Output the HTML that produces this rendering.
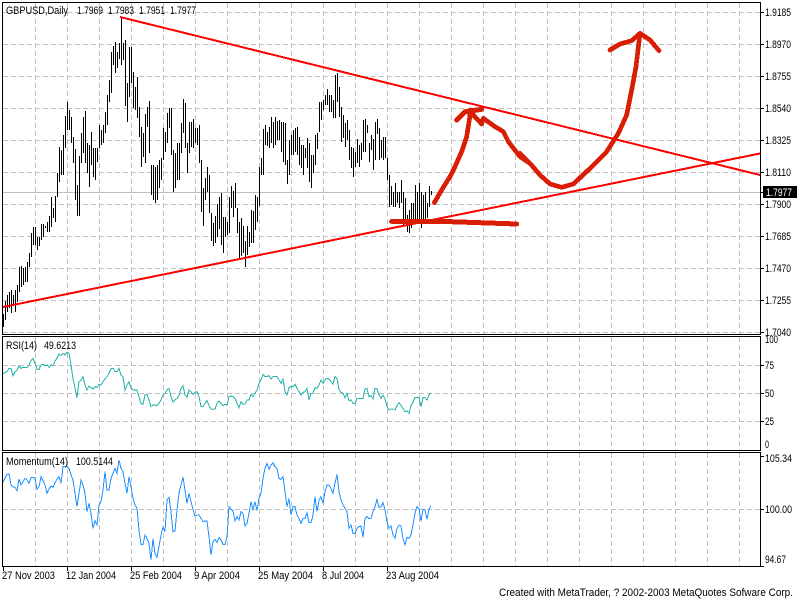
<!DOCTYPE html>
<html><head><meta charset="utf-8"><title>GBPUSD Daily</title>
<style>
html,body{margin:0;padding:0;background:#fff;width:800px;height:600px;overflow:hidden}
svg{display:block}
text{font-family:"Liberation Sans",sans-serif;font-size:11px;fill:#000}
</style></head><body>
<svg width="800" height="600" viewBox="0 0 800 600" xmlns="http://www.w3.org/2000/svg">
<rect width="800" height="600" fill="#fff"/>
<!-- grid -->
<g fill="none" stroke="#c0c0c0" stroke-dasharray="5 3" shape-rendering="crispEdges">
<path d="M3 12.5H760M3 44.5H760M3 76.5H760M3 108.5H760M3 140.5H760M3 172.5H760M3 204.5H760M3 236.5H760M3 268.5H760M3 300.5H760M3 332.5H760"/>
<path d="M3 365.5H760M3 393.5H760M3 421.5H760M3 509.5H760"/>
<path d="M35.5 3V334M67.5 3V334M99.5 3V334M131.5 3V334M163.5 3V334M195.5 3V334M227.5 3V334M259.5 3V334M291.5 3V334M323.5 3V334M355.5 3V334M387.5 3V334M419.5 3V334M451.5 3V334M483.5 3V334M515.5 3V334M547.5 3V334M579.5 3V334M611.5 3V334M643.5 3V334M675.5 3V334M707.5 3V334M739.5 3V334"/>
<path d="M35.5 337V450M67.5 337V450M99.5 337V450M131.5 337V450M163.5 337V450M195.5 337V450M227.5 337V450M259.5 337V450M291.5 337V450M323.5 337V450M355.5 337V450M387.5 337V450M419.5 337V450M451.5 337V450M483.5 337V450M515.5 337V450M547.5 337V450M579.5 337V450M611.5 337V450M643.5 337V450M675.5 337V450M707.5 337V450M739.5 337V450"/>
<path d="M35.5 453V566M67.5 453V566M99.5 453V566M131.5 453V566M163.5 453V566M195.5 453V566M227.5 453V566M259.5 453V566M291.5 453V566M323.5 453V566M355.5 453V566M387.5 453V566M419.5 453V566M451.5 453V566M483.5 453V566M515.5 453V566M547.5 453V566M579.5 453V566M611.5 453V566M643.5 453V566M675.5 453V566M707.5 453V566M739.5 453V566"/>
</g>
<path d="M3 192.5H760" stroke="#c4bcc4" fill="none" shape-rendering="crispEdges"/>
<!-- price bars -->
<path transform="translate(.5 0)" stroke="#000" fill="none" shape-rendering="crispEdges" d="M3 314V327M5 301V320M7 295V312M9 292V308M11 290V313M13 295V305M15 290V312M17 285V302M19 267V292M21 266V287M23 268V285M25 267V282M27 262V282M29 253V267M31 233V257M33 227V245M35 227V245M37 237V250M39 237V246M41 224V240M43 224V237M45 226V228M47 222V232M49 216V232M51 197V227M53 208V218M55 196V222M57 173V197M59 147V182M61 150V175M63 135V175M65 116V148M67 102V130M69 110V130M71 117V143M73 137V163M75 149V200M77 185V216M79 156V216M81 133V163M83 117V153M85 111V163M87 143V173M89 145V187M91 132V165M93 148V177M95 148V180M97 148V162M99 125V148M101 130V145M103 125V143M105 112V133M107 95V125M109 80V102M111 52V93M113 46V65M115 42V73M117 52V68M119 43V59M121 17V65M123 43V60M125 40V106M127 83V122M129 47V97M131 47V83M133 72V108M135 87V110M137 77V118M139 107V137M141 127V167M143 133V157M145 114V163M147 107V127M149 101V153M151 165V195M153 165V200M155 167V203M157 165V200M159 160V188M161 158V180M163 128V160M165 132V152M167 113V143M169 108V128M171 108V155M173 150V192M175 153V188M177 143V180M179 143V180M181 123V153M183 99V133M185 103V148M187 143V173M189 122V153M191 122V147M193 119V148M195 128V143M197 128V145M199 125V163M201 160V212M203 188V226M205 178V200M207 167V192M209 175V213M211 213V241M213 223V246M215 216V243M217 204V237M219 197V229M221 193V245M223 217V253M225 217V237M227 222V235M229 197V233M231 186V208M233 191V217M235 183V208M237 208V233M239 222V258M241 218V256M243 226V253M245 241V267M247 226V255M249 232V247M251 210V243M253 211V243M255 195V230M257 197V222M259 167V206M261 158V175M263 129V175M265 125V145M267 132V146M269 127V148M271 117V143M273 122V148M275 117V145M277 121V140M279 120V140M281 122V152M283 122V162M285 123V165M287 160V184M289 140V175M291 135V155M293 130V155M295 128V152M297 127V155M299 137V165M301 145V168M303 145V175M305 148V158M307 138V168M309 143V182M311 155V188M313 155V173M315 135V165M317 133V149M319 102V132M321 102V120M323 100V110M325 95V105M327 89V105M329 95V112M331 95V112M333 100V118M335 75V118M337 73V102M339 87V117M341 107V142M343 115V138M345 123V147M347 120V140M349 130V160M351 147V168M353 148V177M355 152V167M357 139V163M359 145V167M361 143V160M363 120V152M365 119V152M367 125V133M369 143V162M371 135V150M373 139V170M375 122V160M377 119V134M379 128V160M381 140V158M383 137V160M385 137V158M387 158V180M389 175V207M391 186V205M393 192V207M395 183V207M397 192V203M399 192V208M401 180V203M403 192V225M405 198V223M407 215V232M409 210V233M411 203V228M413 203V223M415 185V223M417 192V223M419 183V223M421 192V228M423 195V223M425 192V220M427 203V218M429 186V207M431 191V195"/>
<!-- trend lines -->
<g fill="none" stroke="#ff0000" stroke-width="2" shape-rendering="crispEdges">
<path d="M120 17L760 175"/>
<path d="M3 307L760 153.500"/>
</g>
<!-- hand drawn -->
<g fill="none" stroke="#d81e05" stroke-linecap="round" stroke-linejoin="round" shape-rendering="crispEdges">
<g transform="translate(250 60) scale(.33333)" stroke-width="14">
<path d="M553 428L575 390L600 350L615 320L635 275L650 230L658 180L662 150"/>
<path d="M620 180L645 155L695 148" stroke-width="15"/>
<path d="M670 165L695 192L700 175L735 200L760 215L775 245L810 290L840 310"/>
<path d="M425 484L600 485L800 492" stroke-width="15"/>
</g>
<g transform="translate(530 0) scale(.33333)" stroke-width="14">
<path d="M-30 460L0 490L30 525L60 552L95 562L130 552L175 510L230 455L265 400L290 345L305 270L318 200L330 100"/>
<path d="M240 150L270 132L305 122L330 100L360 120L387 152"/>
</g>
</g>
<!-- RSI -->
<g fill="none" stroke="#20b2aa" stroke-width="3" shape-rendering="crispEdges">
<polyline transform="translate(0 335) scale(.33333)" points="9,117 15,112 21,110 27,100 33,100 39,122 45,110 51,105 57,92 63,100 69,97 75,97 81,97 87,90 93,76 99,70 105,85 111,103 117,103 123,90 129,88 135,92 141,90 147,97 153,90 159,92 165,78 171,70 177,57 183,62 189,55 195,60 201,52 207,55 213,90 219,130 225,160 231,188 237,140 243,135 249,125 255,150 261,165 267,153 273,158 279,162 285,155 291,157 297,148 303,150 309,140 315,132 321,125 327,115 333,100 339,100 345,110 351,110 357,100 363,120 369,125 375,165 381,150 387,140 393,160 399,165 405,165 411,165 417,185 423,205 429,208 435,180 441,178 447,195 453,215 459,210 465,210 471,212 477,205 483,195 489,180 495,175 501,165 507,160 513,185 519,202 525,195 531,190 537,182 543,160 549,152 555,180 561,187 567,165 573,170 579,178 585,172 591,170 597,185 603,215 609,215 615,205 621,197 627,212 633,222 639,223 645,222 651,205 657,197"/>
<polyline transform="translate(220 335) scale(.33333)" points="-3,197 3,205 9,212 15,208 21,210 27,185 33,183 39,185 45,190 51,205 57,218 63,200 69,208 75,207 81,195 87,195 93,178 99,185 105,175 111,165 117,145 123,135 129,118 135,125 141,125 147,122 153,132 159,125 165,125 171,125 177,135 183,145 189,132 195,170 201,180 207,158 213,155 219,155 225,148 231,160 237,170 243,180 249,172 255,170 261,160 267,195 273,175 279,175 285,158 291,160 297,150 303,135 309,145 315,135 321,130 327,132 333,140 339,147 345,125 351,130 357,165 363,172 369,175 375,188 381,175 387,197 393,195 399,205 405,205 411,190 417,190 423,190 429,190 435,162 441,160 447,185 453,182 459,192 465,160 471,162 477,180 483,190 489,180 495,192 501,215 507,225 513,222 519,222 525,225 531,212 537,203 543,212 549,220 555,230 561,228 567,235 573,212 579,200 585,188 591,187 597,187 603,215 609,188 615,188 621,195 627,180 633,175"/>
</g>
<!-- Momentum -->
<g fill="none" stroke="#1e90ff" stroke-width="3" shape-rendering="crispEdges">
<polyline transform="translate(0 450) scale(.33333)" points="9,97 15,85 21,73 27,72 33,105 39,110 45,112 51,122 57,87 63,105 69,95 75,85 81,90 87,100 93,83 99,82 105,85 111,118 117,110 123,80 129,92 135,105 141,130 147,117 153,108 159,112 165,98 171,88 177,80 183,100 189,50 195,50 201,50 207,55 213,75 219,90 225,130 231,170 237,130 243,90 249,105 255,130 261,185 267,160 273,190 279,235 285,212 291,225 297,165 303,155 309,120 315,65 321,120 327,120 333,85 339,70 345,55 351,70 357,30 363,55 369,65 375,100 381,130 387,80 393,110 399,145 405,165 411,175 417,240 423,283 429,283 435,255 441,265 447,280 453,330 459,265 465,312 471,322 477,290 483,255 489,232 495,245 501,150 507,142 513,185 519,245 525,243 531,180 537,130 543,105 549,82 555,120 561,160 567,130 573,155 579,178 585,198 591,195 597,195 603,205 609,215 615,213 621,213 627,260 633,315 639,275 645,268 651,278 657,262"/>
<polyline transform="translate(220 450) scale(.33333)" points="-3,262 3,270 9,283 15,283 21,260 27,170 33,178 39,182 45,212 51,200 57,210 63,185 69,190 75,228 81,220 87,190 93,155 99,178 105,155 111,182 117,145 123,130 129,85 135,55 141,40 147,58 153,45 159,38 165,50 171,55 177,85 183,88 189,80 195,125 201,170 207,145 213,195 219,170 225,170 231,195 237,205 243,220 249,205 255,205 261,188 267,218 273,218 279,195 285,140 291,185 297,150 303,140 309,160 315,125 321,105 327,105 333,115 339,130 345,100 351,73 357,125 363,150 369,165 375,175 381,185 387,235 393,225 399,250 405,250 411,235 417,230 423,228 429,262 435,205 441,200 447,205 453,205 459,185 465,170 471,148 477,172 483,170 489,158 495,180 501,215 507,235 513,228 519,255 525,265 531,235 537,225 543,228 549,265 555,285 561,262 567,265 573,255 579,225 585,190 591,170 597,175 603,215 609,178 615,180 621,208 627,178 633,167"/>
</g>
<!-- frames & ticks -->
<g fill="none" stroke="#000" shape-rendering="crispEdges">
<rect x="2.500" y="2.500" width="758" height="332"/>
<rect x="2.500" y="336.500" width="758" height="114"/>
<rect x="2.500" y="452.500" width="758" height="114"/>
<path d="M761 12.500H764M761 44.500H764M761 76.500H764M761 108.500H764M761 140.500H764M761 172.500H764M761 192.500H764M761 204.500H764M761 236.500H764M761 268.500H764M761 300.500H764M761 332.500H764M761 365.500H764M761 393.500H764M761 421.500H764M761 456.500H764M761 509.500H764M761 566.500H764"/>
<path d="M3.500 567V571M67.500 567V571M131.500 567V571M195.500 567V571M259.500 567V571M323.500 567V571M387.500 567V571"/>
</g>
<rect x="763" y="186" width="34" height="12" fill="#000"/>
<!-- text -->
<text x="6" y="14" textLength="62" lengthAdjust="spacingAndGlyphs">GBPUSD,Daily</text>
<text x="77" y="14" textLength="26" lengthAdjust="spacingAndGlyphs">1.7969</text>
<text x="108" y="14" textLength="26" lengthAdjust="spacingAndGlyphs">1.7983</text>
<text x="139" y="14" textLength="26" lengthAdjust="spacingAndGlyphs">1.7951</text>
<text x="170" y="14" textLength="26" lengthAdjust="spacingAndGlyphs">1.7977</text>
<text x="6" y="349" textLength="31" lengthAdjust="spacingAndGlyphs">RSI(14)</text>
<text x="44" y="349" textLength="32" lengthAdjust="spacingAndGlyphs">49.6213</text>
<text x="6" y="465" textLength="62" lengthAdjust="spacingAndGlyphs">Momentum(14)</text>
<text x="76" y="465" textLength="37" lengthAdjust="spacingAndGlyphs">100.5144</text>
<g>
<text x="765" y="16" textLength="26" lengthAdjust="spacingAndGlyphs">1.9185</text>
<text x="765" y="48" textLength="26" lengthAdjust="spacingAndGlyphs">1.8970</text>
<text x="765" y="80" textLength="26" lengthAdjust="spacingAndGlyphs">1.8755</text>
<text x="765" y="112" textLength="26" lengthAdjust="spacingAndGlyphs">1.8540</text>
<text x="765" y="144" textLength="26" lengthAdjust="spacingAndGlyphs">1.8325</text>
<text x="765" y="176" textLength="26" lengthAdjust="spacingAndGlyphs">1.8110</text>
<text x="766" y="196" textLength="26" lengthAdjust="spacingAndGlyphs" style="fill:#fff">1.7977</text>
<text x="765" y="208" textLength="26" lengthAdjust="spacingAndGlyphs">1.7900</text>
<text x="765" y="240" textLength="26" lengthAdjust="spacingAndGlyphs">1.7685</text>
<text x="765" y="272" textLength="26" lengthAdjust="spacingAndGlyphs">1.7470</text>
<text x="765" y="304" textLength="26" lengthAdjust="spacingAndGlyphs">1.7255</text>
<text x="765" y="336" textLength="26" lengthAdjust="spacingAndGlyphs">1.7040</text>
<text x="765" y="343" textLength="13" lengthAdjust="spacingAndGlyphs">100</text>
<text x="765" y="369" textLength="9" lengthAdjust="spacingAndGlyphs">75</text>
<text x="765" y="397" textLength="9" lengthAdjust="spacingAndGlyphs">50</text>
<text x="765" y="425" textLength="9" lengthAdjust="spacingAndGlyphs">25</text>
<text x="765" y="448" textLength="4" lengthAdjust="spacingAndGlyphs">0</text>
<text x="765" y="462" textLength="27" lengthAdjust="spacingAndGlyphs">105.34</text>
<text x="765" y="513" textLength="27" lengthAdjust="spacingAndGlyphs">100.00</text>
<text x="765" y="563" textLength="21" lengthAdjust="spacingAndGlyphs">94.67</text>
</g>
<text x="2" y="579" textLength="53" lengthAdjust="spacingAndGlyphs">27 Nov 2003</text>
<text x="66" y="579" textLength="50" lengthAdjust="spacingAndGlyphs">12 Jan 2004</text>
<text x="130" y="579" textLength="52" lengthAdjust="spacingAndGlyphs">25 Feb 2004</text>
<text x="194" y="579" textLength="46" lengthAdjust="spacingAndGlyphs">9 Apr 2004</text>
<text x="258" y="579" textLength="55" lengthAdjust="spacingAndGlyphs">25 May 2004</text>
<text x="322" y="579" textLength="42" lengthAdjust="spacingAndGlyphs">8 Jul 2004</text>
<text x="386" y="579" textLength="53" lengthAdjust="spacingAndGlyphs">23 Aug 2004</text>
<text x="499" y="596" textLength="294" lengthAdjust="spacingAndGlyphs">Created with MetaTrader, ? 2002-2003 MetaQuotes Sofware Corp.</text>
</svg>
</body></html>
